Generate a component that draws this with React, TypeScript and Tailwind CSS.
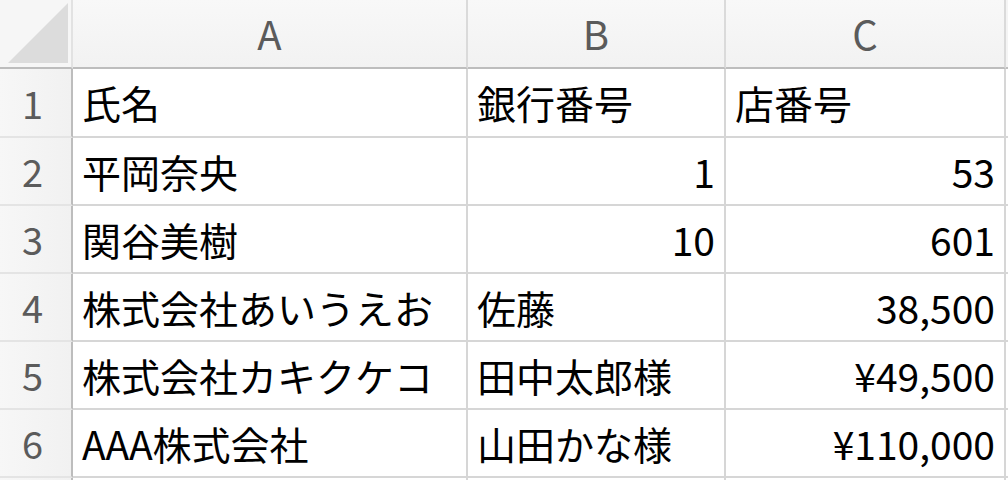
import React from 'react';

type Cell = { text: string; align?: 'left' | 'right' };

const columns = ['A', 'B', 'C'];

const rows: Cell[][] = [
  [{ text: '氏名' }, { text: '銀行番号' }, { text: '店番号' }],
  [{ text: '平岡奈央' }, { text: '1', align: 'right' }, { text: '53', align: 'right' }],
  [{ text: '関谷美樹' }, { text: '10', align: 'right' }, { text: '601', align: 'right' }],
  [{ text: '株式会社あいうえお' }, { text: '佐藤' }, { text: '38,500', align: 'right' }],
  [{ text: '株式会社カキクケコ' }, { text: '田中太郎様' }, { text: '¥49,500', align: 'right' }],
  [{ text: 'AAA株式会社' }, { text: '山田かな様' }, { text: '¥110,000', align: 'right' }],
  // partly visible row at the bottom edge
  [{ text: '' }, { text: '' }, { text: '' }],
];

const Corner: React.FC = () => (
  <div className="bg-[#f6f6f6] border-r-2 border-b-2 border-r-[#e2e2e2] border-b-[#bdbdbd] flex items-end justify-end pr-[3px] pb-[4px]">
    <svg width="60" height="60" viewBox="0 0 60 60">
      <polygon points="0,60 60,60 60,0" fill="#dcdcdc" />
    </svg>
  </div>
);

const App: React.FC = () => {
  return (
    <div className="w-[1008px] h-[480px] overflow-hidden bg-white font-['Noto_Sans_CJK_JP','Noto_Sans',sans-serif]">
      <div className="grid grid-cols-[73px_395px_258px_280px_2px] grid-rows-[69px_69px_68px_68px_68px_68px_68px_68px]">
        <Corner />
        {columns.map((col) => (
          <div
            key={col}
            className="bg-gradient-to-b from-[#f8f8f8] to-[#f2f2f2] border-r-2 border-b-2 border-r-[#dadada] border-b-[#bdbdbd] flex items-center justify-center text-[40px] text-[#5b5b5b] leading-none pb-[2px]"
          >
            {col}
          </div>
        ))}
        <div className="bg-[#f4f4f4] border-b-2 border-b-[#bdbdbd]" />

        {rows.map((row, rowIndex) => {
          const isLast = rowIndex === rows.length - 1;
          return (
            <React.Fragment key={rowIndex}>
              <div className="bg-gradient-to-r from-[#f7f7f7] to-[#f1f1f1] border-r-2 border-b-2 border-r-[#bdbdbd] border-b-[#e4e4e4] flex items-center justify-center pr-[6px] text-[38px] text-[#5b5b5b] leading-none">
                {isLast ? '' : rowIndex + 1}
              </div>
              {row.map((cell, colIndex) => (
                <div
                  key={colIndex}
                  className={`border-r-2 border-b-2 border-[#d6d6d6] flex items-center text-[39px] text-black leading-none whitespace-nowrap overflow-hidden ${
                    cell.align === 'right' ? 'justify-end pr-[9px]' : 'justify-start pl-[9px]'
                  }`}
                >
                  {cell.text}
                </div>
              ))}
              <div className="border-b-2 border-[#d6d6d6]" />
            </React.Fragment>
          );
        })}
      </div>
    </div>
  );
};

export default App;
